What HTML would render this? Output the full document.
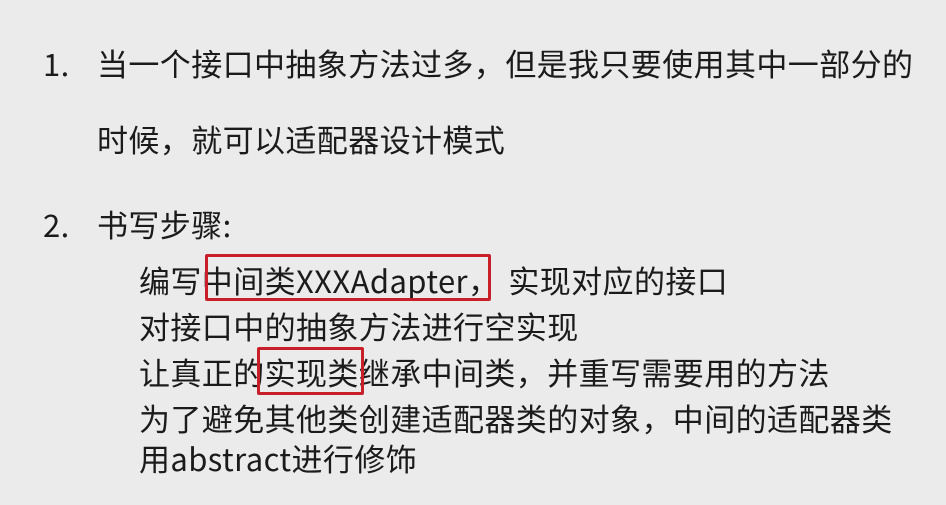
<!DOCTYPE html>
<html><head><meta charset="utf-8"><style>
html,body{margin:0;padding:0;}
body{width:946px;height:505px;background:#ebebeb;position:relative;overflow:hidden;
font-family:"Noto Sans CJK SC","Liberation Sans",sans-serif;color:#1b1b1b;font-size:31px;}
.l{position:absolute;height:40px;line-height:40px;white-space:nowrap;letter-spacing:0.4px;}
.box{position:absolute;border:3px solid #c8202a;border-radius:2px;box-sizing:border-box;}
</style></head><body>
<div class="l" style="left:43px;top:43px;">1.</div>
<div class="l" style="left:97px;top:43px;">当一个接口中抽象方法过多，但是我只要使用其中一部分的</div>
<div class="l" style="left:97px;top:119px;">时候，就可以适配器设计模式</div>
<div class="l" style="left:43px;top:204px;">2.</div>
<div class="l" style="left:97px;top:204px;">书写步骤:</div>
<div class="l" style="left:139px;top:260px;">编写中间类XXXAdapter，<span style="margin-left:9px">实现对应的接口</span></div>
<div class="l" style="left:139px;top:306px;">对接口中的抽象方法进行空实现</div>
<div class="l" style="left:139px;top:352px;">让真正的实现类继承中间类，并重写需要用的方法</div>
<div class="l" style="left:139px;top:398px;">为了避免其他类创建适配器类的对象，中间的适配器类</div>
<div class="l" style="left:139px;top:438px;">用abstract进行修饰</div>
<div class="box" style="left:205px;top:254px;width:286px;height:47px;"></div>
<div class="box" style="left:257px;top:347px;width:107px;height:48px;"></div>
</body></html>
